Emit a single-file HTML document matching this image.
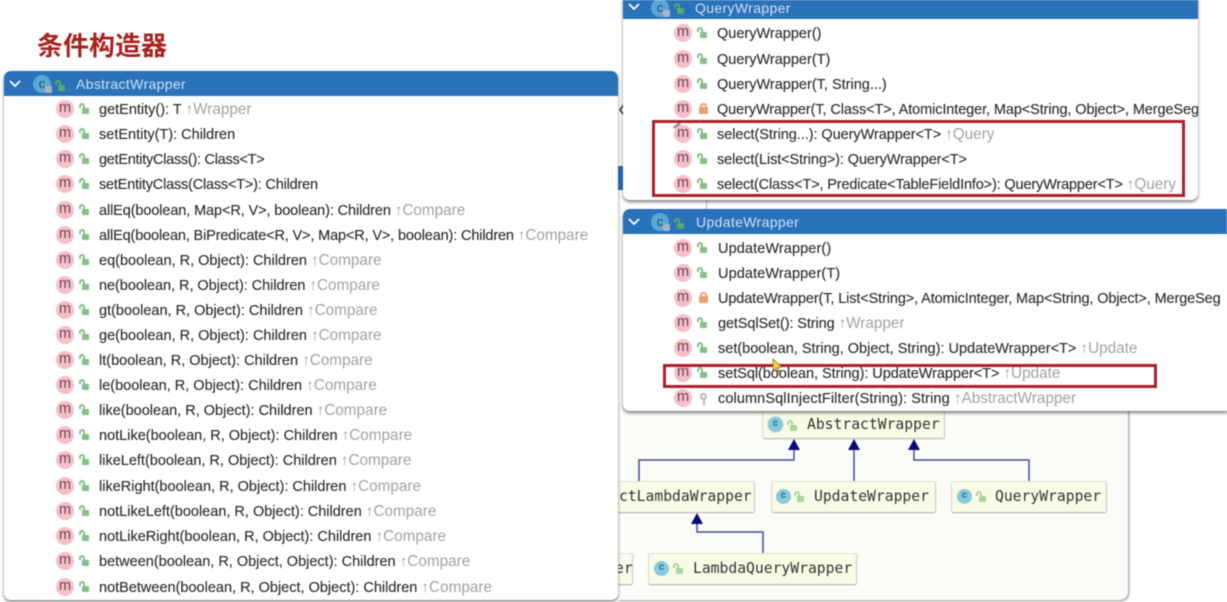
<!DOCTYPE html>
<html><head><meta charset="utf-8">
<style>
html,body{margin:0;padding:0;width:1227px;height:602px;overflow:hidden;background:#fff}
#w{position:absolute;left:0;top:0;width:1227px;height:602px;overflow:hidden;filter:blur(.4px);font-family:"Liberation Sans","Noto Sans CJK SC",sans-serif;color:#2b2b2b;font-size:14.5px}
.p{position:absolute;background:#fff;box-shadow:0 2px 3px rgba(0,0,0,.5);border-radius:7px}
.h{position:absolute;background:#2a72b9;color:#cfe1f3;font-size:14px;line-height:24px;letter-spacing:.35px}
.r{position:absolute;height:20px;width:10px;white-space:nowrap;line-height:20px}
.r i{position:absolute;left:0;top:1px;width:18px;height:18px;border-radius:50%;background:#f6bfc9;color:#6b464d;font:normal 14.5px/16px "Liberation Sans",sans-serif;text-align:center}
.r b,.lk{position:absolute;left:26px;top:9px;width:7px;height:6px;background:#84c088;border-radius:1px}
.r b:before,.lk:before{content:"";position:absolute;left:-3px;top:-5px;width:2px;height:3px;border:2px solid #84c088;border-bottom:0;border-radius:3px 3px 0 0}
.r b.c{left:25px;background:#ec9f6f;width:9px;height:7px;top:8px}
.r b.c:before{left:1px;top:-4px;width:3px;height:3px;border-color:#ec9f6f}
.r b.k{background:none;border:2px solid #b5b5b5;width:3px;height:3px;border-radius:50%;top:5px;left:26px}
.r b.k:before{left:1px;top:5px;width:0;height:5px;border:0;border-left:2px solid #b5b5b5;border-radius:0}
.r span{position:absolute;left:43px;top:1px;-webkit-text-stroke:.12px #2b2b2b}
.u span{left:44px}
.r u{text-decoration:none;color:#a2a2a2;font-size:15.3px;-webkit-text-stroke:0;letter-spacing:0}
.rb{position:absolute;border:3px solid #ae1f2e;box-sizing:border-box}
.d{position:absolute;background:#fafbe6;box-shadow:0 1px 1px #aaa,1px 0 1px #ccc,-1px 0 0 #e4e4d8,0 -1px 0 #e4e4d8;font:14.7px/30px "DejaVu Sans Mono","Liberation Mono",monospace;color:#333;white-space:nowrap}
.d em{position:absolute;top:7px;width:15px;height:15px;border-radius:50%;background:#86cbdc;color:#2e6c88;font:bold 10px/14px "Liberation Sans",sans-serif;text-align:center}
.d .lk{background:#a9d69b;top:14px}
.d .lk:before{border-color:#a9d69b}
.d span{position:absolute;top:0}
.ci{position:absolute;width:18px;height:18px;border-radius:50%;background:#5aa7d6;color:#23496d;font:normal 13px/17px "Liberation Sans",sans-serif;text-align:center}
.ci:after{content:"";position:absolute;left:12px;top:11px;width:7px;height:7px;background:#a9b4c0;border-radius:1px}
.hl{position:absolute;width:7px;height:6px;background:#55a86f;border-radius:1px}
.hl:before{content:"";position:absolute;left:-3px;top:-5px;width:2px;height:3px;border:2px solid #55a86f;border-bottom:0;border-radius:3px 3px 0 0}
</style></head><body><div id="w">

<div style="position:absolute;left:618px;top:405px;width:510px;height:195px;background:#fafcf8;border-radius:0 0 8px 0;box-shadow:1px 1px 2px rgba(0,0,0,.45)"></div>
<div style="position:absolute;left:617px;top:166px;width:8px;height:24px;background:#2a72b9"></div>
<div style="position:absolute;left:706px;top:198px;width:1px;height:12px;background:#bbb"></div>

<svg style="position:absolute;left:0;top:0" width="1227" height="602" fill="none">
<path d="M639 482V460H794V445M854 482V445M1029 482V460H914V445M763 554V532H697V520" stroke="#4b4b8e" stroke-width="1.5"/>
<path d="M794 439l-6 11h12zM854 439l-6 11h12zM914 439l-6 11h12zM697 513l-6 11h12z" fill="#0a0a78"/>
<path d="M624 104l-4 6 4 5" stroke="#333" stroke-width="1.5"/>
</svg>

<div class="d" style="left:763px;top:411px;width:181px;height:27px;line-height:27px"><em style="left:5px;top:6px;box-shadow:0 0 0 1px #cfe6ec">c</em><div class="lk" style="left:27px;top:14px"></div><span style="left:44px">AbstractWrapper</span></div>
<div class="d" style="left:618px;top:482px;width:136px;height:30px"><span style="left:1px">ctLambdaWrapper</span></div>
<div class="d" style="left:772px;top:482px;width:163px;height:30px"><em style="left:4px">c</em><div class="lk" style="left:25px"></div><span style="left:42px">UpdateWrapper</span></div>
<div class="d" style="left:952px;top:482px;width:154px;height:30px"><em style="left:5px">c</em><div class="lk" style="left:27px"></div><span style="left:43px">QueryWrapper</span></div>
<div class="d" style="left:618px;top:554px;width:14px;height:30px"><span style="left:-3px">er</span></div>
<div class="d" style="left:649px;top:554px;width:207px;height:30px"><em style="left:5px">c</em><div class="lk" style="left:27px"></div><span style="left:44px">LambdaQueryWrapper</span></div>

<div style="position:absolute;left:37px;top:27px;font:bold 26px/36px 'Noto Sans CJK SC',sans-serif;color:#a8231f">条件构造器</div>

<!-- Abstract panel -->
<div class="p" style="left:4px;top:71px;width:614px;height:529px"></div>
<div class="h" style="left:4px;top:71px;width:614px;height:25px;border-radius:7px 7px 0 0"><span style="position:absolute;left:72px;top:1px">AbstractWrapper</span></div>
<svg style="position:absolute;left:9px;top:80px" width="12" height="8" fill="none"><path d="M1 1l5 5 5-5" stroke="#fff" stroke-width="1.8"/></svg>
<div class="ci" style="left:33px;top:75px">c</div><div class="hl" style="left:58px;top:85px"></div>

<div class="r" style="left:56px;top:99px"><i>m</i><b></b><span>getEntity(): T <u>↑Wrapper</u></span></div>
<div class="r" style="left:56px;top:124px"><i>m</i><b></b><span>setEntity(T): Children</span></div>
<div class="r" style="left:56px;top:149px"><i>m</i><b></b><span style="letter-spacing:-.27px">getEntityClass(): Class&lt;T&gt;</span></div>
<div class="r" style="left:56px;top:174px"><i>m</i><b></b><span style="letter-spacing:-.2px">setEntityClass(Class&lt;T&gt;): Children</span></div>
<div class="r" style="left:56px;top:200px"><i>m</i><b></b><span style="letter-spacing:-.11px">allEq(boolean, Map&lt;R, V&gt;, boolean): Children <u>↑Compare</u></span></div>
<div class="r" style="left:56px;top:225px"><i>m</i><b></b><span style="letter-spacing:-.145px">allEq(boolean, BiPredicate&lt;R, V&gt;, Map&lt;R, V&gt;, boolean): Children <u>↑Compare</u></span></div>
<div class="r" style="left:56px;top:250px"><i>m</i><b></b><span>eq(boolean, R, Object): Children <u>↑Compare</u></span></div>
<div class="r" style="left:56px;top:275px"><i>m</i><b></b><span style="letter-spacing:-.05px">ne(boolean, R, Object): Children <u>↑Compare</u></span></div>
<div class="r" style="left:56px;top:300px"><i>m</i><b></b><span>gt(boolean, R, Object): Children <u>↑Compare</u></span></div>
<div class="r" style="left:56px;top:325px"><i>m</i><b></b><span>ge(boolean, R, Object): Children <u>↑Compare</u></span></div>
<div class="r" style="left:56px;top:350px"><i>m</i><b></b><span>lt(boolean, R, Object): Children <u>↑Compare</u></span></div>
<div class="r" style="left:56px;top:375px"><i>m</i><b></b><span>le(boolean, R, Object): Children <u>↑Compare</u></span></div>
<div class="r" style="left:56px;top:400px"><i>m</i><b></b><span>like(boolean, R, Object): Children <u>↑Compare</u></span></div>
<div class="r" style="left:56px;top:425px"><i>m</i><b></b><span>notLike(boolean, R, Object): Children <u>↑Compare</u></span></div>
<div class="r" style="left:56px;top:450px"><i>m</i><b></b><span>likeLeft(boolean, R, Object): Children <u>↑Compare</u></span></div>
<div class="r" style="left:56px;top:476px"><i>m</i><b></b><span>likeRight(boolean, R, Object): Children <u>↑Compare</u></span></div>
<div class="r" style="left:56px;top:501px"><i>m</i><b></b><span>notLikeLeft(boolean, R, Object): Children <u>↑Compare</u></span></div>
<div class="r" style="left:56px;top:526px"><i>m</i><b></b><span>notLikeRight(boolean, R, Object): Children <u>↑Compare</u></span></div>
<div class="r" style="left:56px;top:551px"><i>m</i><b></b><span>between(boolean, R, Object, Object): Children <u>↑Compare</u></span></div>
<div class="r" style="left:56px;top:577px"><i>m</i><b></b><span>notBetween(boolean, R, Object, Object): Children <u>↑Compare</u></span></div>

<!-- Query panel -->
<div class="p" style="left:623px;top:-8px;width:575px;height:208px"></div>
<div class="h" style="left:623px;top:0;width:575px;height:19px"><span style="position:absolute;left:72px;top:-4px">QueryWrapper</span></div>
<svg style="position:absolute;left:628px;top:3px" width="12" height="8" fill="none"><path d="M1 1l5 5 5-5" stroke="#fff" stroke-width="1.8"/></svg>
<div class="ci" style="left:651px;top:-1px">c</div><div class="hl" style="left:677px;top:8px"></div>

<div style="position:absolute;left:623px;top:19px;width:575px;height:180px;overflow:hidden">
<div class="r" style="left:51px;top:4px"><i>m</i><b></b><span>QueryWrapper()</span></div>
<div class="r" style="left:51px;top:30px"><i>m</i><b></b><span>QueryWrapper(T)</span></div>
<div class="r" style="left:51px;top:55px"><i>m</i><b></b><span>QueryWrapper(T, String...)</span></div>
<div class="r" style="left:51px;top:80px"><i>m</i><b class="c"></b><span style="letter-spacing:-.1px">QueryWrapper(T, Class&lt;T&gt;, AtomicInteger, Map&lt;String, Object&gt;, MergeSeg</span></div>
<div class="r" style="left:51px;top:105px"><i>m</i><b></b><span style="letter-spacing:-.06px">select(String...): QueryWrapper&lt;T&gt; <u>↑Query</u></span></div>
<div class="r" style="left:51px;top:130px"><i>m</i><b></b><span style="letter-spacing:-.1px">select(List&lt;String&gt;): QueryWrapper&lt;T&gt;</span></div>
<div class="r" style="left:51px;top:155px"><i>m</i><b></b><span style="letter-spacing:-.15px">select(Class&lt;T&gt;, Predicate&lt;TableFieldInfo&gt;): QueryWrapper&lt;T&gt; <u>↑Query</u></span></div>
</div>
<div style="position:absolute;left:673px;top:124px;width:8px;height:3px;background:#999;transform:rotate(-35deg)"></div>
<div class="rb" style="left:652px;top:120px;width:533px;height:77px"></div>

<!-- Update panel -->
<div class="p" style="left:623px;top:209px;width:620px;height:202px"></div>
<div class="h" style="left:623px;top:209px;width:604px;height:25px;border-radius:7px 0 0 0"><span style="position:absolute;left:73px;top:1px">UpdateWrapper</span></div>
<svg style="position:absolute;left:628px;top:218px" width="12" height="8" fill="none"><path d="M1 1l5 5 5-5" stroke="#fff" stroke-width="1.8"/></svg>
<div class="ci" style="left:651px;top:213px">c</div><div class="hl" style="left:677px;top:223px"></div>

<div class="r u" style="left:674px;top:238px"><i>m</i><b></b><span style="letter-spacing:.1px">UpdateWrapper()</span></div>
<div class="r u" style="left:674px;top:263px"><i>m</i><b></b><span style="letter-spacing:.1px">UpdateWrapper(T)</span></div>
<div class="r u" style="left:674px;top:288px"><i>m</i><b class="c"></b><span style="letter-spacing:-.12px">UpdateWrapper(T, List&lt;String&gt;, AtomicInteger, Map&lt;String, Object&gt;, MergeSeg</span></div>
<div class="r u" style="left:674px;top:313px"><i>m</i><b></b><span style="letter-spacing:-.1px">getSqlSet(): String <u>↑Wrapper</u></span></div>
<div class="r u" style="left:674px;top:338px"><i>m</i><b></b><span>set(boolean, String, Object, String): UpdateWrapper&lt;T&gt; <u>↑Update</u></span></div>
<div class="r u" style="left:674px;top:363px"><i>m</i><b></b><span style="letter-spacing:-.05px">setSql(boolean, String): UpdateWrapper&lt;T&gt; <u>↑Update</u></span></div>
<div class="r u" style="left:674px;top:388px"><i>m</i><b class="k"></b><span style="letter-spacing:.1px">columnSqlInjectFilter(String): String <u>↑AbstractWrapper</u></span></div>
<div class="rb" style="left:663px;top:364px;width:494px;height:24px"></div>
<svg style="position:absolute;left:772px;top:358px" width="12" height="16"><path d="M1 1v11l3-2 2 4 2-1-2-4h4z" fill="#e8d44a" stroke="#7a6a20" stroke-width=".7"/></svg>

</div></body></html>
